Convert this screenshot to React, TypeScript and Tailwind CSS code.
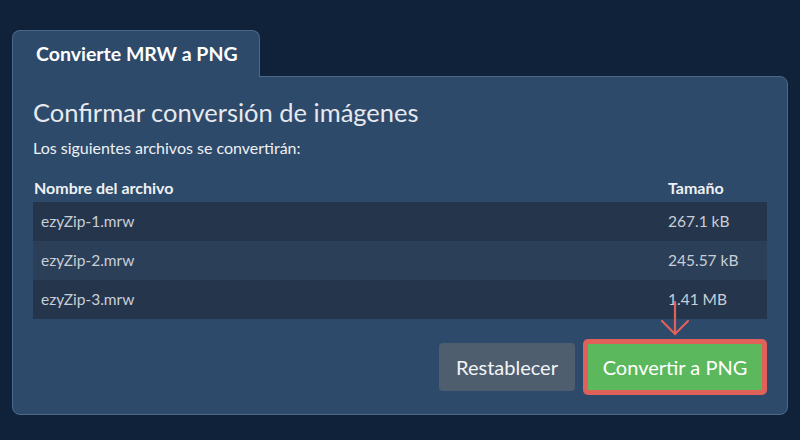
export default function App() {
  const files = [
    { name: "ezyZip-1.mrw", size: "267.1 kB" },
    { name: "ezyZip-2.mrw", size: "245.57 kB" },
    { name: "ezyZip-3.mrw", size: "1.41 MB" },
  ];

  return (
    <div
      className="w-[800px] h-[440px] bg-[#10223a] pt-[30px] px-[12px] overflow-hidden"
      style={{ fontFamily: "Lato, 'Noto Sans', sans-serif" }}
    >
      {/* pestaña */}
      <div className="relative z-10 w-[248px] h-[47px] -mb-px bg-[#2d4a6a] border border-b-0 border-[#4b6888] rounded-t-lg flex items-center pl-[23px]">
        <span className="text-[19.5px] font-bold text-white">Convierte MRW a PNG</span>
      </div>

      {/* panel principal */}
      <div className="w-[776px] h-[339px] bg-[#2d4a6a] border border-[#4b6888] rounded-b-lg rounded-tr-lg px-[20px] pt-[19px]">
        <h1 className="text-[25.5px] leading-[32px] text-[#e6e9ed]">Confirmar conversión de imágenes</h1>
        <p className="mt-[10px] text-[16px] leading-[20px] text-[#eef0f3]">Los siguientes archivos se convertirán:</p>

        <div className="mt-[19px] w-[734px]">
          <div className="flex h-[25px] items-start text-[16px] leading-[22px] font-bold text-[#eef0f3]">
            <div className="flex-1 pl-[1px]">Nombre del archivo</div>
            <div className="w-[99px]">Tamaño</div>
          </div>
          {files.map((f, i) => (
            <div
              key={f.name}
              className={`flex h-[39px] items-center text-[15.5px] text-[#c9ced6] ${i % 2 === 0 ? "bg-[#25364c]" : "bg-[#2b4058]"}`}
            >
              <div className="flex-1 pl-[8px]">{f.name}</div>
              <div className="w-[99px]">{f.size}</div>
            </div>
          ))}
        </div>

        <div className="mt-[20px] w-[734px] flex justify-end gap-[8px]">
          <button className="mt-[4px] w-[136px] h-[48px] rounded bg-[#4f5e6f] text-[20px] text-[#f2f4f6]">
            Restablecer
          </button>
          <div className="relative">
            {/* flecha */}
            <svg
              className="absolute left-[77px] -top-[38px]"
              width="30"
              height="36"
              viewBox="0 0 30 36"
              fill="none"
              stroke="#e0605a"
              strokeWidth="2.2"
              strokeLinecap="round"
            >
              <path d="M15 1 V33" />
              <path d="M2 20 L15 33 L28 20" />
            </svg>
            <div className="w-[184px] h-[56px] rounded-[5px] bg-[#e0605a] p-[5px]">
              <button className="w-full h-full bg-[#5cb85c] text-[20px] text-white">
                Convertir a PNG
              </button>
            </div>
          </div>
        </div>
      </div>
    </div>
  );
}
